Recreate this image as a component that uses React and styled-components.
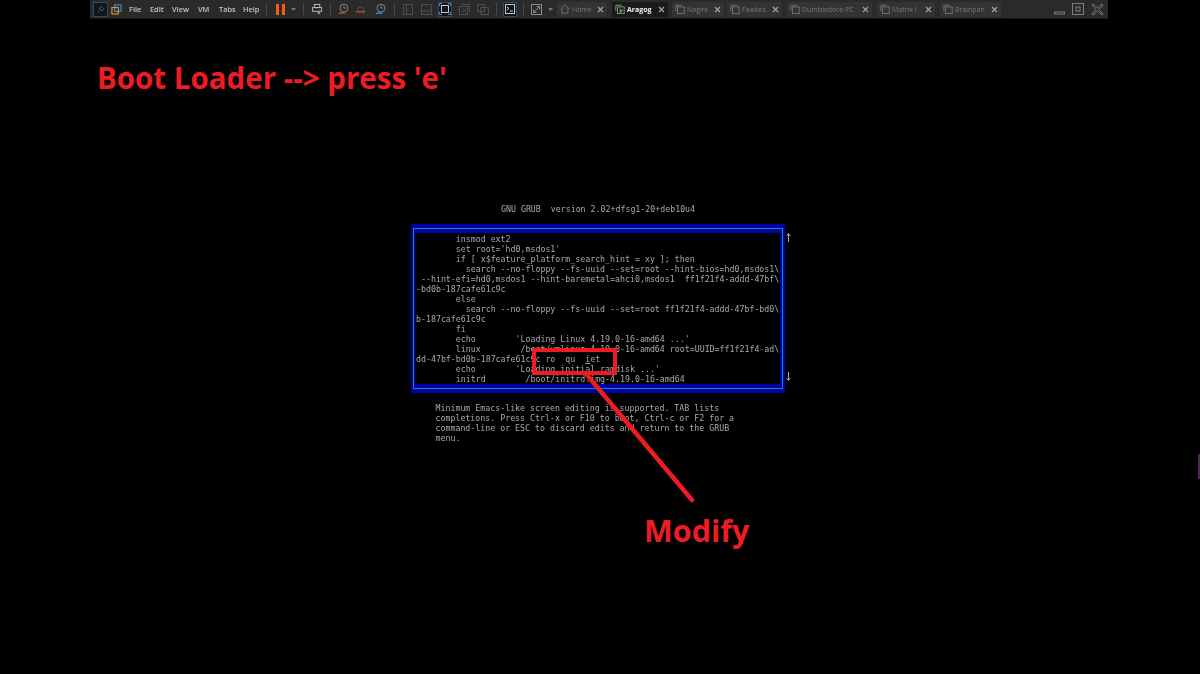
import React from 'react';
import styled, { createGlobalStyle } from 'styled-components';

const GlobalStyle = createGlobalStyle`
  html, body {
    margin: 0;
    background: #000;
  }
`;

const Page = styled.div`
  position: relative;
  width: 1200px;
  height: 674px;
  overflow: hidden;
  background: #000;
  font-family: 'Open Sans', sans-serif;
`;

/* vmware toolbar */
const Toolbar = styled.div`
  display: flex;
  align-items: center;
  width: 1018px;
  height: 19px;
  margin-left: 90px;
  background: #2a2a2a;
  box-sizing: border-box;
  border-bottom: 1px solid #161616;
  filter: blur(0.3px);
`;

const Slot = styled.span`
  display: flex;
  flex: none;
  align-items: center;
  justify-content: center;
  width: ${p => p.$w}px;
  height: ${p => (p.$focus ? 15 : 14)}px;
  margin-left: ${p => p.$ml || 0}px;
  box-sizing: border-box;
  ${p => p.$focus && `
    background: #10161c;
    border: 1px solid #2c4a66;
  `}
`;

const MenuItem = styled.span`
  flex: none;
  width: ${p => p.$w}px;
  margin-left: ${p => p.$ml}px;
  color: #c4c4c4;
  font-size: 7.4px;
  font-weight: 600;
  white-space: nowrap;
`;

const Divider = styled.span`
  flex: none;
  width: 1px;
  height: 12px;
  margin-left: ${p => p.$ml}px;
  background: #4a4a4a;
`;

const Tab = styled.div`
  display: flex;
  flex: none;
  align-items: center;
  width: ${p => p.$w}px;
  height: 15px;
  margin-left: ${p => p.$ml}px;
  padding: 0 3px;
  box-sizing: border-box;
  background: ${p => (p.$active ? '#1a1a1a' : '#333333')};
  color: ${p => (p.$active ? '#f2f2f2' : '#777777')};
  font-size: 7px;
  font-weight: ${p => (p.$active ? 700 : 400)};
`;

const TabLabel = styled.span`
  flex: 1;
  margin-left: 2px;
  white-space: nowrap;
  overflow: hidden;
`;

const Icon = ({ w = 12, h = 12, vb = '0 0 12 12', children }) => (
  <svg width={w} height={h} viewBox={vb} fill="none" stroke="#bdbdbd" strokeWidth="1">
    {children}
  </svg>
);

const CopyIcon = () => (
  <Icon w={10} h={10}>
    <path d="M1 8.5V1.5H8" stroke="#7a7a7a" />
    <rect x="3" y="3.5" width="8" height="8" stroke="#7a7a7a" />
  </Icon>
);

const CloseIcon = () => (
  <Icon w={7} h={7} vb="0 0 7 7">
    <path d="M1 1L6 6M6 1L1 6" stroke="#a0a0a0" strokeWidth="1.2" />
  </Icon>
);

const Caret = () => (
  <svg width="5" height="3" viewBox="0 0 5 3">
    <path d="M0 0H5L2.5 3Z" fill="#777" />
  </svg>
);

const ClockIcon = ({ color }) => (
  <Icon>
    <circle cx="6.5" cy="5" r="4.3" stroke="#8a8a8a" />
    <path d="M6.5 2.5V5H8.5" stroke="#8a8a8a" />
    <path d="M1 10.5H8" stroke={color} strokeWidth="1.6" />
  </Icon>
);

const tabs = [
  { label: 'Home', w: 50, ml: 4, home: true },
  { label: 'Aragog', w: 56, ml: 5, active: true },
  { label: 'Nagini', w: 52, ml: 4 },
  { label: 'Fawkes', w: 55, ml: 3 },
  { label: 'Dumbledore-PC', w: 85, ml: 5 },
  { label: 'Matrix I', w: 58, ml: 5 },
  { label: 'Brainpan', w: 61, ml: 5 },
];

const menu = [
  ['File', 15, 7],
  ['Edit', 16, 6],
  ['View', 20, 6],
  ['VM', 15, 6],
  ['Tabs', 18, 6],
  ['Help', 17, 6],
];

const TopBar = () => (
  <Toolbar>
    <Slot $w={15} $ml={3} $focus>
      <Icon w={9} h={9}>
        <path d="M2 10L5 7M4 4L8 8M7 1.5L10.5 5L8 8L4 4Z" stroke="#666" />
      </Icon>
    </Slot>
    <Slot $w={11} $ml={3}>
      <Icon w={11} h={11}>
        <rect x="4" y="1" width="7" height="7" stroke="#2f8fd8" strokeWidth="1.3" />
        <rect x="1" y="3.8" width="7" height="7" stroke="#ef8a1a" strokeWidth="1.3" />
      </Icon>
    </Slot>
    {menu.map(([label, w, ml]) => (
      <MenuItem key={label} $w={w} $ml={ml}>
        {label}
      </MenuItem>
    ))}
    <Divider $ml={6} />
    <Slot $w={9} $ml={9}>
      <svg width="9" height="11" viewBox="0 0 9 11">
        <path d="M0 0H3V11H0ZM6 0H9V11H6Z" fill="#ef5f14" />
      </svg>
    </Slot>
    <Slot $w={5} $ml={6}>
      <Caret />
    </Slot>
    <Divider $ml={7} />
    <Slot $w={11} $ml={8}>
      <Icon w={11} h={12}>
        <rect x="2.5" y="1" width="6" height="3.5" />
        <rect x="0.5" y="4.5" width="10" height="4" />
        <path d="M7.5 9L7.5 11.5M6 10.5H9" />
      </Icon>
    </Slot>
    <Divider $ml={7} />
    <Slot $w={11} $ml={7}>
      <ClockIcon color="#b5562a" />
    </Slot>
    <Slot $w={11} $ml={6}>
      <Icon>
        <path d="M3 8V6.5A3.3 3.3 0 0 1 9.5 6.5V8" stroke="#5a5a5a" />
        <path d="M1 9H11" stroke="#a84c22" strokeWidth="1.8" />
      </Icon>
    </Slot>
    <Slot $w={11} $ml={9}>
      <ClockIcon color="#2f8fd8" />
    </Slot>
    <Divider $ml={8} />
    <Slot $w={10} $ml={8}>
      <Icon w={10} h={11} vb="0 0 10 11">
        <rect x="0.5" y="0.5" width="9" height="10" stroke="#4e4e4e" />
        <path d="M3.5 1V10" stroke="#4e4e4e" />
      </Icon>
    </Slot>
    <Slot $w={11} $ml={8}>
      <Icon w={11} h={11} vb="0 0 11 11">
        <rect x="0.5" y="0.5" width="10" height="10" stroke="#4e4e4e" />
        <path d="M1 7H10" stroke="#4e4e4e" />
      </Icon>
    </Slot>
    <Slot $w={14} $ml={6} $focus>
      <Icon w={12} h={12}>
        <path d="M0.5 3V0.5H3M9 0.5H11.5V3M11.5 9V11.5H9M3 11.5H0.5V9" stroke="#4f86b4" />
        <rect x="2.5" y="2.5" width="7" height="7" stroke="#c8c8c8" />
      </Icon>
    </Slot>
    <Slot $w={11} $ml={7}>
      <Icon w={11} h={11} vb="0 0 11 11">
        <rect x="0.5" y="2.5" width="8" height="8" stroke="#4e4e4e" />
        <path d="M3 0.5H10.5V8M4 4.5L7 8M7 4.5L4 8" stroke="#4e4e4e" />
      </Icon>
    </Slot>
    <Slot $w={12} $ml={7}>
      <Icon w={12} h={11} vb="0 0 12 11">
        <rect x="0.5" y="0.5" width="7" height="7" stroke="#4e4e4e" />
        <rect x="4" y="3.5" width="7.5" height="7" stroke="#4e4e4e" />
      </Icon>
    </Slot>
    <Divider $ml={7} />
    <Slot $w={14} $ml={6} $focus>
      <Icon w={10} h={10} vb="0 0 10 10">
        <rect x="0.5" y="0.5" width="9" height="9" stroke="#c8c8c8" />
        <path d="M2 3L4 4.5L2 6M5 7H8" stroke="#c8c8c8" />
      </Icon>
    </Slot>
    <Divider $ml={6} />
    <Slot $w={11} $ml={7}>
      <Icon w={11} h={11} vb="0 0 11 11">
        <rect x="0.5" y="0.5" width="10" height="10" stroke="#8a8a8a" />
        <path d="M2.5 8.5L8.5 2.5M5.5 2.5H8.5V5.5M2.5 5.5V8.5H5.5" stroke="#8a8a8a" />
      </Icon>
    </Slot>
    <Slot $w={5} $ml={6}>
      <Caret />
    </Slot>
    {tabs.map(t => (
      <Tab key={t.label} $w={t.w} $ml={t.ml} $active={t.active}>
        {t.home ? (
          <Icon w={10} h={10}>
            <path d="M1 6L6 1L11 6M2.5 5V11H9.5V5" stroke="#7a7a7a" />
          </Icon>
        ) : t.active ? (
          <Icon w={10} h={10}>
            <path d="M1 8.5V1.5H8" stroke="#9a9a9a" />
            <rect x="3" y="3.5" width="8" height="8" stroke="#9a9a9a" />
            <path d="M5.5 5L10 8L5.5 11Z" fill="#3fae3f" stroke="none" />
          </Icon>
        ) : (
          <CopyIcon />
        )}
        <TabLabel>{t.label}</TabLabel>
        <CloseIcon />
      </Tab>
    ))}
    <WindowControls>
      <svg width="11" height="12" viewBox="0 0 11 12">
        <rect x="0.5" y="9" width="10" height="2" fill="none" stroke="#7c7c7c" />
      </svg>
      <svg width="12" height="12" viewBox="0 0 12 12">
        <rect x="0.5" y="0.5" width="11" height="11" fill="none" stroke="#7c7c7c" />
        <rect x="4" y="4" width="4" height="4" fill="none" stroke="#7c7c7c" />
      </svg>
      <svg width="13" height="13" viewBox="0 0 13 13">
        <path d="M2 1L6.5 5L11 1L12 2L8 6.5L12 11L11 12L6.5 8L2 12L1 11L5 6.5L1 2Z" fill="none" stroke="#7c7c7c" />
      </svg>
    </WindowControls>
  </Toolbar>
);

const WindowControls = styled.div`
  display: flex;
  flex: none;
  align-items: center;
  gap: 7px;
  margin-left: 53px;
`;

/* slide body */
const Heading = styled.h1`
  margin: 41px 0 0 97px;
  color: #ed1c24;
  font-size: 29.5px;
  font-weight: 700;
  line-height: 36px;
  white-space: nowrap;
`;

const Console = styled.div`
  display: flex;
  flex-direction: column;
  width: 400px;
  margin: 108px 0 0 411px;
  color: #a8a8a8;
  font-family: 'DejaVu Sans Mono', monospace;
  font-size: 8.28px;
  line-height: 10px;
  filter: blur(0.3px);
`;

const GrubTitle = styled.div`
  height: 10px;
  margin-bottom: 10px;
  padding-left: 90px;
  white-space: pre;
`;

const EditorRow = styled.div`
  display: flex;
  align-items: flex-start;
`;

const FrameOuter = styled.div`
  flex: none;
  width: 374px;
  height: 169px;
  box-sizing: border-box;
  border-style: solid;
  border-color: #0000a8;
  border-width: 4px 2px 4px 2px;
`;

const FrameLine = styled.div`
  height: 100%;
  box-sizing: border-box;
  border: 1px solid #0f8f9c;
`;

const FrameInner = styled.div`
  height: 100%;
  padding: 1px 0 0 1px;
  box-sizing: border-box;
  background: #000;
  border-style: solid;
  border-color: #0000a8;
  border-width: 4px 2px 4px 1px;
  white-space: pre;
`;

const ScrollMarks = styled.div`
  display: flex;
  flex: none;
  flex-direction: column;
  justify-content: space-between;
  align-items: center;
  width: 6px;
  height: 148px;
  margin: 9px 0 0 0;
`;

const CodeLine = styled.div`
  height: 10px;
`;

const Cursor = styled.span`
  text-decoration: underline;
  text-decoration-thickness: 1px;
`;

const HelpText = styled.div`
  margin: 10px 0 0 24.5px;
  white-space: pre;
`;

/* red annotations on top of the screenshot */
const Overlay = styled.svg`
  position: absolute;
  top: 0;
  left: 0;
  pointer-events: none;
`;

const Highlight = styled.div`
  position: absolute;
  top: 348px;
  left: 532px;
  width: 85px;
  height: 27px;
  box-sizing: border-box;
  border: 4px solid #ed1c24;
`;

const ModifyLabel = styled.div`
  position: absolute;
  top: 510px;
  left: 644px;
  color: #ed1c24;
  font-size: 30.5px;
  font-weight: 700;
  line-height: 40px;
`;

const EdgeMark = styled.div`
  position: absolute;
  top: 454px;
  right: 0;
  width: 2px;
  height: 25px;
  background: #4a2a50;
`;

const codeLines = [
  '        insmod ext2',
  "        set root='hd0,msdos1'",
  '        if [ x$feature_platform_search_hint = xy ]; then',
  '          search --no-floppy --fs-uuid --set=root --hint-bios=hd0,msdos1\\',
  ' --hint-efi=hd0,msdos1 --hint-baremetal=ahci0,msdos1  ff1f21f4-addd-47bf\\',
  '-bd0b-187cafe61c9c',
  '        else',
  '          search --no-floppy --fs-uuid --set=root ff1f21f4-addd-47bf-bd0\\',
  'b-187cafe61c9c',
  '        fi',
  "        echo        'Loading Linux 4.19.0-16-amd64 ...'",
  '        linux        /boot/vmlinuz-4.19.0-16-amd64 root=UUID=ff1f21f4-ad\\',
  <>
    dd-47bf-bd0b-187cafe61c9c ro  qu  <Cursor>i</Cursor>et
  </>,
  "        echo        'Loading initial ramdisk ...'",
  '        initrd        /boot/initrd.img-4.19.0-16-amd64',
];

const helpText = `Minimum Emacs-like screen editing is supported. TAB lists
completions. Press Ctrl-x or F10 to boot, Ctrl-c or F2 for a
command-line or ESC to discard edits and return to the GRUB
menu.`;

const App = () => (
  <Page>
    <GlobalStyle />
    <TopBar />
    <Heading>Boot Loader --&gt; press 'e'</Heading>
    <Console>
      <GrubTitle>GNU GRUB  version 2.02+dfsg1-20+deb10u4</GrubTitle>
      <EditorRow>
        <FrameOuter>
          <FrameLine>
            <FrameInner>
              {codeLines.map((line, i) => (
                <CodeLine key={i}>{line}</CodeLine>
              ))}
            </FrameInner>
          </FrameLine>
        </FrameOuter>
        <ScrollMarks>
          <svg width="5" height="9" viewBox="0 0 5 9">
            <path d="M2.5 0.5V9M0.5 3L2.5 0.5L4.5 3" fill="none" stroke="#a8a8a8" />
          </svg>
          <svg width="5" height="9" viewBox="0 0 5 9">
            <path d="M2.5 0V8.5M0.5 6L2.5 8.5L4.5 6" fill="none" stroke="#a8a8a8" />
          </svg>
        </ScrollMarks>
      </EditorRow>
      <HelpText>{helpText}</HelpText>
    </Console>
    <Highlight />
    <Overlay width="1200" height="674" viewBox="0 0 1200 674">
      <path d="M587 375L692 500" stroke="#ed1c24" strokeWidth="4.5" strokeLinecap="round" />
    </Overlay>
    <ModifyLabel>Modify</ModifyLabel>
    <EdgeMark />
  </Page>
);

export default App;
